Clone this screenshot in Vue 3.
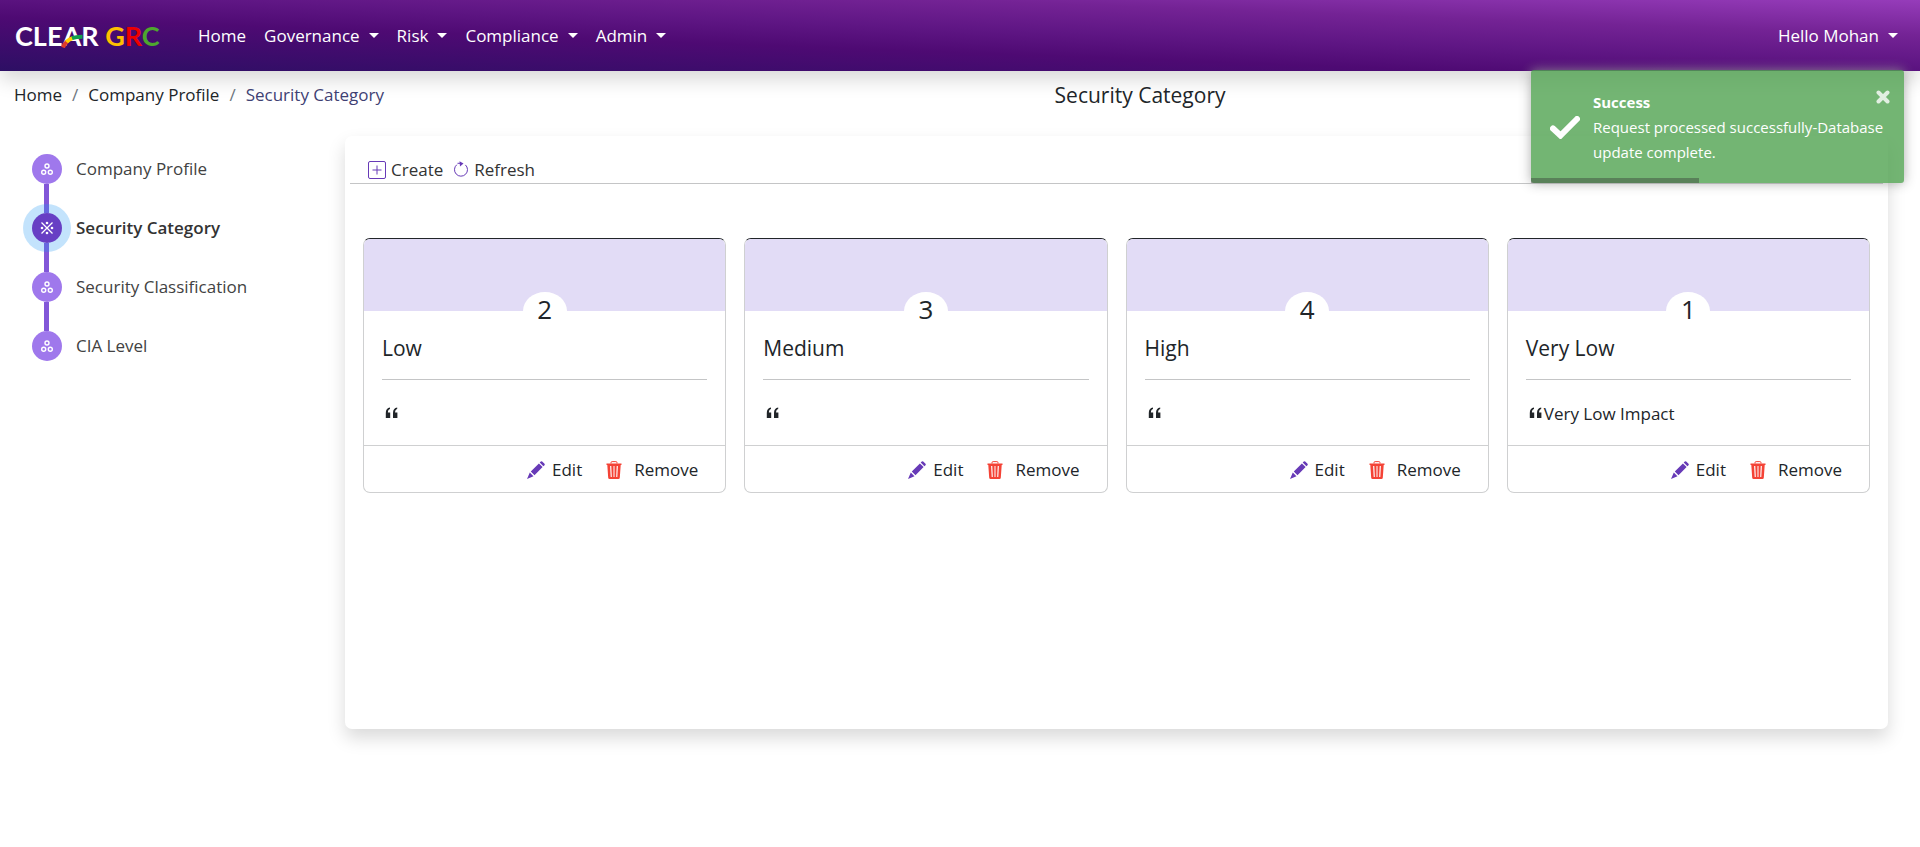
<script setup>
const menu = [
  { label: 'Home', drop: false },
  { label: 'Governance', drop: true },
  { label: 'Risk', drop: true },
  { label: 'Compliance', drop: true },
  { label: 'Admin', drop: true }
]
const steps = [
  { label: 'Company Profile', active: false },
  { label: 'Security Category', active: true },
  { label: 'Security Classification', active: false },
  { label: 'CIA Level', active: false }
]
const cards = [
  { rank: 2, name: 'Low', note: '' },
  { rank: 3, name: 'Medium', note: '' },
  { rank: 4, name: 'High', note: '' },
  { rank: 1, name: 'Very Low', note: 'Very Low Impact' }
]
const progress = 45
</script>

<template>
  <div class="page">
    <header class="navbar">
      <a class="brand" href="#">
        CLE<span class="brand-a">A<svg class="swoosh" viewBox="0 0 22 14" aria-hidden="true">
          <path d="M2 13.500Q3.500 9.500 6.500 7" stroke="#e03a2a" />
          <path d="M5.500 8Q8 5 12 3.800" stroke="#ffd000" />
          <path d="M11 4.200Q15 2.700 21.500 2.700" stroke="#12a04c" />
        </svg></span>R
        <span class="g">G</span><span class="r">R</span><span class="c">C</span>
      </a>
      <nav class="menu">
        <a v-for="m in menu" :key="m.label" href="#">{{ m.label }}<i v-if="m.drop" class="caret"></i></a>
      </nav>
      <a class="user" href="#">Hello Mohan<i class="caret"></i></a>
    </header>

    <div class="heading">
      <nav class="crumbs" aria-label="Breadcrumb">
        <a href="#">Home</a><span class="sep">/</span><a href="#">Company Profile</a><span class="sep">/</span><span class="current">Security Category</span>
      </nav>
      <h1>Security Category</h1>
    </div>

    <div class="body">
      <ul class="steps">
        <li v-for="s in steps" :key="s.label" :class="{ active: s.active }">
          <a href="#">
            <span class="dot">
              <svg v-if="s.active" viewBox="0 0 14 14" aria-hidden="true">
                <path d="M1.500 1.500 12.500 12.500M12.500 1.500 1.500 12.500" stroke="#fff" stroke-width="1.300" />
                <circle cx="7" cy="2" r="1.300" /><circle cx="7" cy="12" r="1.300" />
                <circle cx="2" cy="7" r="1.300" /><circle cx="12" cy="7" r="1.300" />
              </svg>
              <svg v-else viewBox="0 0 14 14" aria-hidden="true">
                <g fill="none" stroke="#fff" stroke-width="1.400">
                  <circle cx="7" cy="4" r="2" /><circle cx="3.700" cy="10.200" r="2" /><circle cx="10.300" cy="10.200" r="2" />
                </g>
              </svg>
            </span>
            <span class="label">{{ s.label }}</span>
          </a>
        </li>
      </ul>

      <main class="panel">
        <div class="toolbar">
          <button type="button">
            <svg class="plus" viewBox="0 0 18 18" aria-hidden="true">
              <rect x=".5" y=".5" width="17" height="17" rx="1.500" />
              <path d="M9 4.500v9M4.500 9h9" />
            </svg>Create
          </button>
          <button type="button">
            <svg class="refresh" viewBox="0 0 16 18" aria-hidden="true">
              <path d="M3.800 3.700A6.500 6.500 0 1 0 12.400 3.900" />
              <path d="M4.500 2.300H8" />
              <path class="head" d="M6.500 .2 10.500 2.600 7 5.500Z" />
            </svg>Refresh
          </button>
        </div>
        <div class="cards">
          <article v-for="c in cards" :key="c.name" class="card">
            <div class="cover"><span class="rank">{{ c.rank }}</span></div>
            <div class="content">
              <h2>{{ c.name }}</h2>
              <p>
                <svg viewBox="0 0 14 12" aria-hidden="true">
                  <path d="M5 .5V2C3.500 2.400 2.900 3.500 2.900 5.500H5.200V11H.8V6C.8 2.800 2.200 .8 5 .5ZM12.200 .5V2C10.700 2.400 10.100 3.500 10.100 5.500H12.400V11H8V6C8 2.800 9.400 .8 12.200 .5Z" />
                </svg>{{ c.note }}
              </p>
            </div>
            <footer>
              <button type="button">
                <svg class="pencil" viewBox="0 0 18 18" aria-hidden="true">
                  <path d="M13.800.5Q14.500-.1 15.200.5L17.500 2.800Q18.100 3.500 17.500 4.200L16.400 5.300 12.700 1.600ZM11.900 2.400 15.600 6.100 7.500 14.200 3.800 10.500ZM2.800 11.500 6.500 15.200 0 18Z" />
                </svg>Edit
              </button>
              <button type="button">
                <svg class="trash" viewBox="0 0 16 18" aria-hidden="true">
                  <path d="M5 2.500V1.700Q5 .6 6.100 .6H9.900Q11 .6 11 1.700V2.500" fill="none" stroke="#f44336" />
                  <path fill-rule="evenodd" d="M.5 2.500H15.500V4H14.700L13.800 16.700Q13.700 18 12.400 18H3.600Q2.300 18 2.200 16.700L1.300 4H.5ZM4.100 5 4.700 16H5.800L5.300 5ZM7.500 5V16H8.500V5ZM10.700 5 10.200 16H11.300L11.900 5Z" />
                </svg>Remove
              </button>
            </footer>
          </article>
        </div>
      </main>
    </div>

    <div class="toast" role="status">
      <svg class="check" viewBox="0 0 30 23" aria-hidden="true"><path d="M3 12.500 10.500 19.500 27 3" /></svg>
      <div>
        <strong>Success</strong>
        <div>Request processed successfully-Database update complete.</div>
      </div>
      <button type="button" aria-label="Close">
        <svg viewBox="0 0 14 14" aria-hidden="true"><path d="M2.500 2.500 11.500 11.500M11.500 2.500 2.500 11.500" /></svg>
      </button>
      <div class="bar" :style="{ width: progress + '%' }"></div>
    </div>
  </div>
</template>

<style>
body { margin: 0; background: #fff; }
</style>

<style scoped>
.page {
  position: relative;
  min-height: 100vh;
  font: 17px/27px "Segoe UI", "Open Sans", "Noto Sans", sans-serif;
  color: #212529;
}
a { color: inherit; text-decoration: none; }
button { font: inherit; color: inherit; background: none; border: 0; padding: 0; display: flex; align-items: center; cursor: pointer; }
h1, h2, p, ul { margin: 0; padding: 0; }

.navbar {
  display: flex;
  align-items: center;
  height: 71px;
  padding: 0 22px 0 15px;
  box-sizing: border-box;
  color: #fff;
  background: linear-gradient(to right top, #2d0f64 0%, #3e0c6c 20%, #4e0a73 38%, #5f1684 55%, #742395 75%, #963cba 100%);
  box-shadow: 0 9px 18px rgba(0, 0, 0, .15);
}
.brand { width: 183px; font: bold 27px/36px Lato, sans-serif; white-space: nowrap; }
.brand-a { position: relative; }
.swoosh { position: absolute; left: -1px; bottom: 4px; width: 22px; height: 14px; fill: none; stroke-width: 4; }
.g { color: #ffc000; }
.r { color: #ee0000; }
.c { color: #4ea72e; }
.menu { display: flex; gap: 18px; flex: 1; }
.caret {
  display: inline-block;
  margin-left: 9px;
  vertical-align: 4px;
  border: 5px solid transparent;
  border-top-color: currentColor;
  border-bottom: 0;
}

.heading { display: flex; align-items: center; height: 48px; padding: 0 14px; }
.crumbs { width: 55%; padding-bottom: 2px; }
.sep { margin: 0 10px; color: #6c757d; }
.current { color: #3f4173; }
h1 { font-size: 21px; font-weight: 400; }

.body { display: flex; align-items: flex-start; padding: 17px 32px 36px 0; }
.steps { width: 345px; flex: none; padding: 18px 0 0 32px; box-sizing: border-box; list-style: none; }
.steps li { position: relative; height: 59px; color: #424242; }
.steps li:not(:last-child)::before {
  content: "";
  position: absolute;
  left: 12px;
  top: 30px;
  width: 5px;
  height: 29px;
  background: #8257d8;
}
.steps a { display: flex; align-items: center; gap: 14px; height: 30px; }
.label { padding-bottom: 2px; }
.dot { position: relative; display: flex; align-items: center; justify-content: center; width: 30px; height: 30px; border-radius: 50%; background: #9f78ec; }
.dot svg { width: 14px; height: 14px; fill: #fff; }
.steps .active { font-weight: 600; color: #333; }
.active .dot { background: #673fc4; box-shadow: 0 0 0 9px rgba(33, 150, 243, .27); }

.panel {
  flex: 1;
  min-height: 593px;
  box-sizing: border-box;
  padding: 18px 5px;
  border-radius: 7px;
  background: #fff;
  box-shadow: 0 9px 18px rgba(0, 0, 0, .15);
}
.toolbar { display: flex; gap: 10px; padding: 2px 18px 0; border-bottom: 1px solid #c4c5c6; color: #333; }
.toolbar svg { fill: none; stroke: #673ab7; }
.plus { width: 18px; height: 18px; margin-right: 5px; }
.refresh { width: 16px; height: 18px; margin-right: 5px; }
.toolbar .head { fill: #673ab7; stroke: none; }
.cards { display: grid; grid-template-columns: repeat(4, 1fr); gap: 18px; padding: 54px 13px 0; }
.card { border: 1px solid #cfd0d1; border-top-color: #212529; border-radius: 7px; overflow: hidden; }
.cover {
  display: flex;
  justify-content: center;
  height: 72px;
  padding-top: 53px;
  box-sizing: border-box;
  background: linear-gradient(#e2dcf6, #e2dcf6);
}
.rank { flex: none; width: 44px; height: 38px; border-radius: 50%; background: #fff; text-align: center; font-size: 26px; line-height: 34px; }
.content { padding: 18px; }
h2 { padding: 6px 0 17px; border-bottom: 1px solid #c4c5c6; font-size: 21px; line-height: 27px; font-weight: 400; }
.content p { display: flex; align-items: center; height: 28px; margin-top: 19px; padding-left: 3px; }
.content p svg { width: 14px; height: 12px; margin-right: 1px; fill: #212529; }
.card footer { display: flex; justify-content: flex-end; gap: 24px; padding: 10px 27px 9px; border-top: 1px solid #cfd0d1; }
.pencil { width: 18px; height: 18px; margin-right: 7px; fill: #673ab7; }
.trash { width: 16px; height: 18px; margin-right: 12px; fill: #f44336; }

.toast {
  position: absolute;
  top: 70px;
  right: 16px;
  width: 373px;
  min-height: 113px;
  box-sizing: border-box;
  display: flex;
  align-items: center;
  gap: 13px;
  padding: 19px 17px 17px 19px;
  border-radius: 3px;
  background: #51a351;
  color: #fff;
  font-size: 15px;
  line-height: 25px;
  opacity: .8;
  box-shadow: 0 0 12px #999;
}
.toast strong { display: block; }
.check { flex: none; width: 30px; height: 23px; fill: none; stroke: #fff; stroke-width: 6; stroke-linecap: round; }
.toast button { position: absolute; right: 14px; top: 20px; opacity: .8; }
.toast button svg { width: 14px; height: 14px; stroke: #fff; stroke-width: 4; stroke-linecap: round; }
.bar { position: absolute; left: 0; bottom: 0; height: 5px; background: #000; opacity: .4; }
</style>
